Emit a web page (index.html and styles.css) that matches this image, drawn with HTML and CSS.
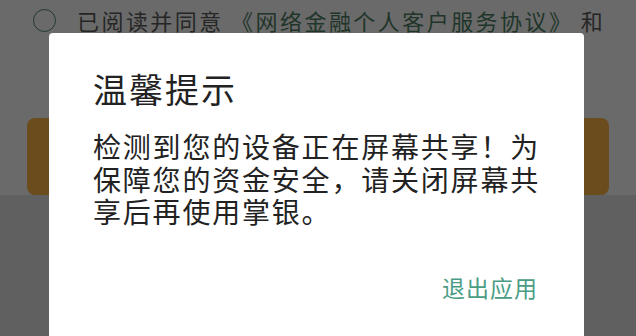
FILE: index.html
```html
<!DOCTYPE html>
<html lang="zh-CN">
<head>
<meta charset="utf-8">
<link rel="stylesheet" href="styles.css">
</head>
<body>
<div class="page">
  <div class="agree">
    <span class="radio"></span>
    <span class="agree-text">已阅读并同意 <span class="link">《网络金融个人客户服务协议》</span> 和</span>
  </div>
  <div class="btn-main"></div>
  <div class="rest"></div>
</div>
<div class="dialog">
  <div class="title">温馨提示</div>
  <div class="msg">检测到您的设备正在屏幕共享！为保障您的资金安全，请关闭屏幕共享后再使用掌银。</div>
  <div class="actions"><span class="exit">退出应用</span></div>
</div>
</body>
</html>
```
FILE: styles.css
```css
html, body {
  margin: 0;
  padding: 0;
  width: 636px;
  height: 336px;
  overflow: hidden;
  background: #6a6a6a;
  font-family: "Noto Sans CJK SC", "Noto Sans", sans-serif;
}
.page {
  display: flex;
  flex-direction: column;
  height: 336px;
}
.agree {
  display: flex;
  align-items: center;
  gap: 21px;
  padding: 5px 0 0 33px;
  height: 30px;
}
.radio {
  width: 21px;
  height: 21px;
  border: 1.6px solid #1f3a30;
  border-radius: 50%;
  flex: none;
}
.agree-text {
  font-size: 22px;
  letter-spacing: 2.45px;
  color: #262626;
  line-height: 30px;
  white-space: nowrap;
}
.link {
  color: #1f3529;
}
.btn-main {
  margin: 83px 27px 0 27px;
  height: 77px;
  background: #6b4c1d;
  border-radius: 8px;
}
.rest {
  flex: 1;
  background: #606060;
}
.dialog {
  position: absolute;
  left: 49px;
  top: 33px;
  width: 535px;
  height: 320px;
  background: #ffffff;
  border-radius: 4px;
  box-sizing: border-box;
  padding: 36px 38px 0 44px;
  display: flex;
  flex-direction: column;
}
.title {
  font-size: 34px;
  line-height: 40px;
  letter-spacing: 2px;
  color: #222222;
}
.msg {
  margin-top: 21px;
  font-size: 28px;
  line-height: 32.5px;
  letter-spacing: 1.8px;
  color: #222222;
}
.actions {
  display: flex;
  justify-content: flex-end;
  margin-top: 44px;
  margin-right: 8px;
}
.exit {
  font-size: 23px;
  line-height: 30px;
  letter-spacing: 1px;
  color: #4a9d84;
}
```
